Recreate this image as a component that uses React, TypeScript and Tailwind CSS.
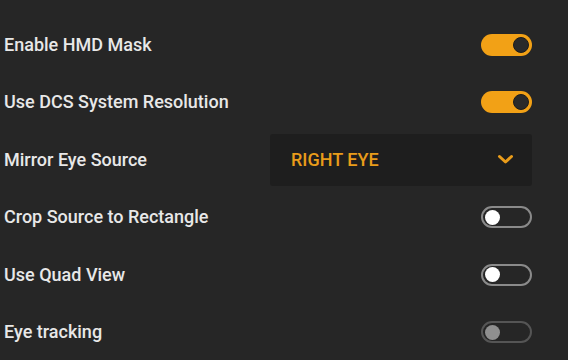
import React from "react";

function Toggle({ on, disabled }: { on?: boolean; disabled?: boolean }) {
  if (on) {
    return (
      <div className="w-[51px] h-[22px] rounded-full bg-[#f2a116] flex items-center justify-end pr-[3px]">
        <div className="w-[16px] h-[16px] rounded-full bg-[#2a2a2a] border border-[#1c1c1c]" />
      </div>
    );
  }
  return (
    <div
      className={
        "w-[51px] h-[22px] rounded-full border-2 flex items-center pl-[2px] " +
        (disabled ? "border-[#555555]" : "border-[#8a8a8a]")
      }
    >
      <div
        className={
          "w-[15px] h-[15px] rounded-full " + (disabled ? "bg-[#8f8f8f]" : "bg-white")
        }
      />
    </div>
  );
}

function Row({ label, children }: { label: string; children: React.ReactNode }) {
  return (
    <div className="h-[57.5px] flex items-center justify-between pl-[4px] pr-[36px]">
      <span className="text-[18px] leading-[22px] font-medium text-[#e8e8e8]">{label}</span>
      {children}
    </div>
  );
}

export default function App() {
  return (
    <div
      className="w-[568px] h-[360px] bg-[#262626] pt-[16px] overflow-hidden"
      style={{ fontFamily: "Roboto, 'Liberation Sans', sans-serif" }}
    >
      <Row label="Enable HMD Mask">
        <Toggle on />
      </Row>
      <Row label="Use DCS System Resolution">
        <Toggle on />
      </Row>
      <Row label="Mirror Eye Source">
        <div className="w-[262px] h-[52px] bg-[#1e1e1e] rounded-[3px] flex items-center justify-between pl-[21px] pr-[18px]">
          <span className="text-[18px] leading-[22px] font-medium text-[#e99c1a]">RIGHT EYE</span>
          <svg width="17" height="11" viewBox="0 0 17 11">
            <path d="M2.5 2.5 L8.5 8 L14.5 2.5" stroke="#e99c1a" strokeWidth="3" fill="none" strokeLinecap="round" strokeLinejoin="round" />
          </svg>
        </div>
      </Row>
      <Row label="Crop Source to Rectangle">
        <Toggle />
      </Row>
      <Row label="Use Quad View">
        <Toggle />
      </Row>
      <Row label="Eye tracking">
        <Toggle disabled />
      </Row>
    </div>
  );
}
